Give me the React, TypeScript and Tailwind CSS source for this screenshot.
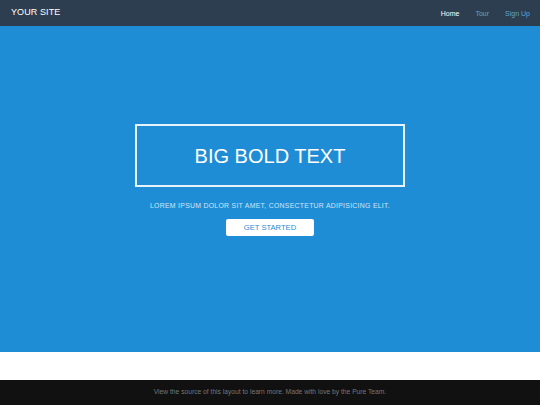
import React from 'react';

export default function App() {
  return (
    <div className="w-[540px] h-[405px] flex flex-col bg-white overflow-hidden font-['Liberation_Sans',Arial,sans-serif]">
      {/* Header */}
      <header className="h-[26px] shrink-0 bg-[#2d3e50] flex items-center justify-between pl-[11px] pr-[10px]">
        <span className="text-[9px] text-white tracking-[0.01em]">YOUR SITE</span>
        <nav className="flex items-center gap-[16px] text-[7px] leading-none">
          <a className="text-white">Home</a>
          <a className="text-[#5da3d9]">Tour</a>
          <a className="text-[#5da3d9]">Sign Up</a>
        </nav>
      </header>

      {/* Splash */}
      <section className="h-[326px] shrink-0 bg-[#1f8dd6] flex flex-col items-center pt-[98px]">
        <div className="w-[270px] h-[63px] border-2 border-[#e6f3fc] flex items-center justify-center">
          <h1 className="text-[20px] text-white leading-none">BIG BOLD TEXT</h1>
        </div>
        <p className="mt-[16px] text-[6.9px] text-[#cfe6f7] tracking-[0.04em] leading-none">
          LOREM IPSUM DOLOR SIT AMET, CONSECTETUR ADIPISICING ELIT.
        </p>
        <button className="mt-[9px] w-[88px] h-[17px] bg-white rounded-[2px] text-[#1f8dd6] text-[7.6px] leading-none flex items-center justify-center pt-[1px]">
          GET STARTED
        </button>
      </section>

      {/* Content spacer */}
      <div className="h-[28px] shrink-0 bg-white" />

      {/* Footer */}
      <footer className="flex-1 bg-[#111111] flex items-center justify-center">
        <span className="text-[6.7px] text-[#777777]">
          View the source of this layout to learn more. Made with love by the Pure Team.
        </span>
      </footer>
    </div>
  );
}
